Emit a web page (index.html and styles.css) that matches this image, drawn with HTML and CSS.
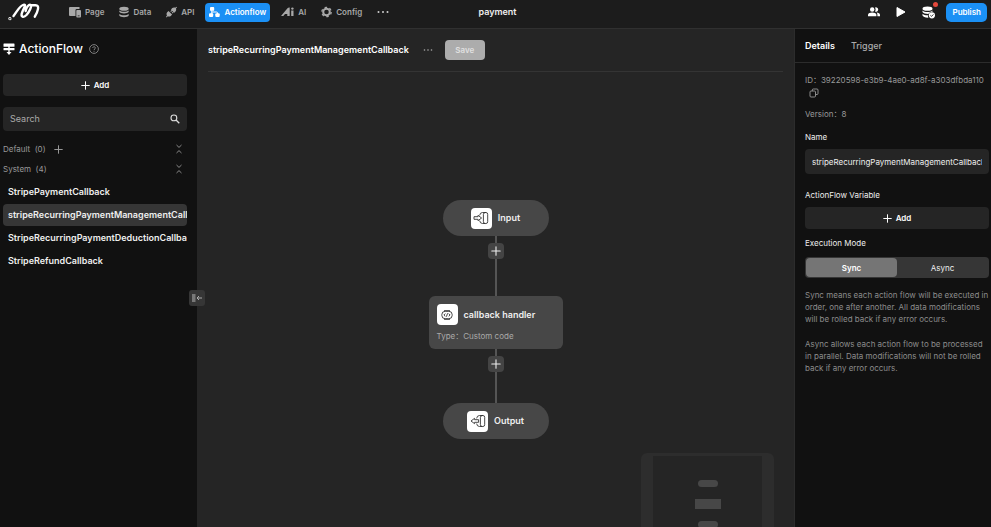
FILE: index.html
```html
<!DOCTYPE html>
<html lang="en">
<head>
<meta charset="utf-8">
<title>ActionFlow</title>
<link rel="stylesheet" href="styles.css">
</head>
<body>
<svg class="defs" aria-hidden="true">
  <symbol id="plus" viewBox="0 0 10 10"><path d="M5 .8v8.4M.8 5h8.4" fill="none" stroke="currentColor" stroke-width="1.1" stroke-linecap="round"/></symbol>
  <symbol id="fold" viewBox="0 0 8 10"><path d="M1.5 1 4 3.4 6.500 1M1.500 9 4 6.600 6.500 9" fill="none" stroke="currentColor" stroke-width=".9"/></symbol>
  <symbol id="door" viewBox="0 0 16 14"><g fill="none" stroke="#333" stroke-width=".9" stroke-linecap="round"><rect x="10.400" y="1.500" width="4.300" height="11" rx="1.800"/><path d="M12 1.500H9.500Q7 1.500 6.700 4M6.700 10q.3 2.500 2.800 2.500H12"/></g></symbol>
</svg>

<header class="topbar">
  <div class="left">
    <a class="logo" href="#" aria-label="Home"><svg width="34" height="20" viewBox="0 0 34 20" fill="none" stroke="#fff" stroke-width="2.400" stroke-linecap="round" stroke-linejoin="round"><path d="M5.500 14C9 9.500 12 3 16 2.600c3-.2-1.500 5.400-2.300 9.200-.7 3.400 2 4.200 5 1 2.800-3.200 5.400-8.800 4-9.800-1.700-1-4.700 2.600-5 6M22.700 3.200H27.500c4.500 0 2.500 6-.7 11.500"/><circle cx="1.900" cy="16.700" r=".4"/></svg></a>
    <nav class="nav">
      <a href="#"><svg width="12" height="12" viewBox="0 0 12 12" fill="currentColor"><path d="M1 1h9.500v2H7.800a1.300 1.300 0 0 0-1.300 1.300V10H1a1 1 0 0 1-1-1V2a1 1 0 0 1 1-1z"/><rect x="7.300" y="3.900" width="4.700" height="7.600" rx=".9"/><path d="M8.700 9.800h1.900" stroke="#1d1d1d" stroke-width=".8"/></svg>Page</a>
      <a href="#"><svg width="10" height="12" viewBox="0 0 10 12" fill="currentColor"><ellipse cx="5" cy="2.700" rx="4.700" ry="2"/><path d="M.3 4.400c1.700 1.900 7.700 1.900 9.400 0v1.400c-1 2.200-8.400 2.200-9.400 0zM.3 7.900c1.700 1.900 7.700 1.900 9.400 0v1.500c-1 2.300-8.400 2.300-9.400 0z"/></svg>Data</a>
      <a href="#"><svg width="11" height="12" viewBox="0 0 11 12" fill="currentColor"><path d="M1.200 6.300 2.500 5l3.600 3.600-1.300 1.300c-1 .9-2.200.8-3 .4L.6 11.400 0 10.700l1-1.200c-.6-1-.6-2.200.2-3.200zM5 3.400l1.300-1.300c1-.8 2.100-.8 3-.3l1-1.100.7.700-1.100 1.100c.5.900.4 2-.4 3L8.300 6.800zM4.300 5.200l1.300-1.100.7.700-1.200 1.200zM5.800 6.800 7 5.600l.7.700-1.300 1.200z"/></svg>API</a>
      <a href="#" class="active" aria-current="page"><svg width="11" height="12" viewBox="0 0 11 12" fill="currentColor"><rect x="1" y="1" width="4.200" height="3.800" rx=".9"/><rect x="0" y="7.300" width="4.200" height="3.800" rx="1"/><rect x="6.300" y="7.300" width="4.400" height="3.800" rx="1"/><path d="M2.800 4v4M2.800 6H7.500q1 0 1 1v1" fill="none" stroke="currentColor"/></svg>Actionflow</a>
      <a href="#" class="ai"><svg width="13" height="10" viewBox="0 0 13 10" fill="currentColor"><path d="M0 9 6.500 1.200Q7.400.4 8.700.6V9H6.300V7H4L2.300 9zM10.200 3.500h2.300V9h-2.300z"/><circle cx="11.400" cy="1.600" r="1.200"/></svg>AI</a>
      <a href="#"><svg width="11" height="12" viewBox="0 0 11 12" fill="none" stroke="currentColor"><circle cx="5.500" cy="6" r="3.300" stroke-width="2"/><circle cx="5.500" cy="6" r="4.700" stroke-width="1.300" stroke-dasharray="2.500 2.420"/></svg>Config</a>
      <button class="more" type="button" aria-label="More"><svg width="12" height="4" viewBox="0 0 12 4" fill="currentColor"><circle cx="1.500" cy="2" r="1"/><circle cx="6" cy="2" r="1"/><circle cx="10.500" cy="2" r="1"/></svg></button>
    </nav>
  </div>
  <strong class="project">payment</strong>
  <div class="actions">
    <button type="button" aria-label="Members"><svg width="12" height="10" viewBox="0 0 12 10" fill="currentColor"><circle cx="4.200" cy="2.500" r="2.200"/><path d="M0 9.300V7.800c0-3 8.400-3 8.400 0v1.500z"/><path d="M7 .6a2.200 2.200 0 1 1 0 3.900c.8-1.200.8-2.700 0-3.900zM8.600 5.500c1.700.1 3.400.9 3.400 2.300v1.500H9.400V7.800c0-.9-.3-1.600-.8-2.300z"/></svg></button>
    <button type="button" aria-label="Preview"><svg width="10" height="12" viewBox="0 0 10 12"><path d="M1 1.500 9 6l-8 4.500z" fill="currentColor" stroke="currentColor" stroke-linejoin="round"/></svg></button>
    <button type="button" class="sync" aria-label="Database status"><svg width="13" height="13" viewBox="0 0 13 13" fill="currentColor"><ellipse cx="5.500" cy="2.700" rx="5" ry="2.100"/><path d="M.5 4.600c2 2 8 2 10 0v1.200c-2 .1-3.400 1-4.100 2.200C3.800 8 1 7.300.5 6zM.5 7.800C1.700 9 4 9.400 5.900 9.300c0 .9.200 1.600.6 2.300C3.800 11.800.9 11 .5 9.600z"/><circle cx="9.900" cy="9.300" r="3.100"/><path d="m8.400 9.300 1.100 1.100 1.900-2" fill="none" stroke="#1d1d1d" stroke-width=".9"/></svg></button>
    <button type="button" class="publish">Publish</button>
  </div>
</header>

<div class="workspace">
  <aside class="sidebar">
    <h1><svg width="12" height="12" viewBox="0 0 12 12" fill="#fff"><rect x=".5" y=".5" width="11" height="3.200" rx=".5"/><rect x=".5" y="5" width="11" height="2.300" rx=".5"/><path d="M5.300 3h1.400v6h1.800L6 11.900 3.500 9h1.800z"/></svg>ActionFlow<svg width="10" height="10" viewBox="0 0 10 10" fill="none" stroke="#999" stroke-width=".8"><circle cx="5" cy="5" r="4.400"/><path d="M3.700 4c0-1.700 2.700-1.700 2.700-.1C6.400 5 5 4.900 5 6.100M5 6.900v.9"/></svg></h1>
    <button class="add" type="button"><svg width="9" height="9"><use href="#plus"/></svg>Add</button>
    <label class="search"><input type="search" placeholder="Search" aria-label="Search"><svg width="10" height="10" viewBox="0 0 10 10" fill="none" stroke="#ddd" stroke-width="1.100"><circle cx="3.900" cy="3.900" r="2.900"/><path d="m6 6 3.300 3.300" stroke-width="1.300"/></svg></label>
    <div class="group"><span>Default&nbsp; (0)</span><button type="button" aria-label="Add to Default"><svg width="9" height="9"><use href="#plus"/></svg></button><button class="fold" type="button" aria-label="Collapse Default"><svg width="8" height="10"><use href="#fold"/></svg></button></div>
    <div class="group"><span>System&nbsp; (4)</span><button class="fold" type="button" aria-label="Collapse System"><svg width="8" height="10"><use href="#fold"/></svg></button></div>
    <ul class="flows">
      <li><a href="#">StripePaymentCallback</a></li>
      <li><a href="#" class="selected">stripeRecurringPaymentManagementCallback</a></li>
      <li><a href="#">StripeRecurringPaymentDeductionCallback</a></li>
      <li><a href="#">StripeRefundCallback</a></li>
    </ul>
    <button class="handle" type="button" aria-label="Collapse sidebar"><svg width="12" height="10" viewBox="0 0 12 10"><rect x="1" y="1" width="3.500" height="8" fill="#777"/><path d="M11 5H6M8 3 6 5l2 2" fill="none" stroke="#aaa"/></svg></button>
  </aside>

  <main class="canvas">
    <div class="flow-head">
      <h2>stripeRecurringPaymentManagementCallback</h2>
      <button class="dots" type="button" aria-label="Flow options"><svg width="10" height="4" viewBox="0 0 10 4" fill="#aaa"><circle cx="1.500" cy="2" r=".8"/><circle cx="5" cy="2" r=".8"/><circle cx="8.500" cy="2" r=".8"/></svg></button>
      <button class="save" type="button">Save</button>
    </div>
    <div class="graph">
      <div class="terminal"><span class="tile"><svg width="16" height="14"><use href="#door"/><path d="M1 5.700h4V4.300L8.600 7 5 9.700V8.300H1z" fill="#fff" stroke="#333" stroke-width=".9" stroke-linejoin="round"/></svg></span>Input</div>
      <div class="link"><button type="button" aria-label="Insert step after Input"><svg width="10" height="10"><use href="#plus"/></svg></button></div>
      <section class="node">
        <h3><span class="tile"><svg width="12" height="12" viewBox="0 0 12 12" fill="none" stroke="#333" stroke-width=".9"><rect x=".8" y="2.300" width="10.400" height="7.400" rx="3.400"/><path d="M3 1.700h6M3 10.300h6M4.300 4.600 2.900 6l1.400 1.400M7.700 4.600 9.100 6 7.700 7.400M6.600 4.300 5.400 7.700"/></svg></span>callback handler</h3>
        <p>Type：Custom code</p>
      </section>
      <div class="link short"><button type="button" aria-label="Insert step after callback handler"><svg width="10" height="10"><use href="#plus"/></svg></button></div>
      <div class="terminal"><span class="tile"><svg width="16" height="14"><use href="#door"/><path d="M8.600 5.700h-4V4.300L1 7l3.600 2.700V8.300h4z" fill="#fff" stroke="#333" stroke-width=".9" stroke-linejoin="round"/></svg></span>Output</div>
    </div>
    <div class="minimap" aria-hidden="true"><div class="view"><i></i><i class="box"></i><i></i></div></div>
  </main>

  <aside class="details">
    <div class="tabs"><button class="current" type="button">Details</button><button type="button">Trigger</button></div>
    <div class="fields">
      <div class="ident">ID：39220598-e3b9-4ae0-ad8f-a303dfbda110</div>
      <button class="copy" type="button" aria-label="Copy ID"><svg width="10" height="10" viewBox="0 0 10 10" fill="none" stroke="#999" stroke-width=".9"><rect x="1" y="3" width="5.500" height="6" rx="1"/><path d="M3.300 3V2q0-1 1-1H8q1 0 1 1v3.500q0 1-1 1H6.500"/></svg></button>
      <div class="version">Version：8</div>
      <label for="name">Name</label>
      <input id="name" class="name" type="text" value="stripeRecurringPaymentManagementCallback">
      <h4>ActionFlow Variable</h4>
      <button class="add" type="button"><svg width="9" height="9"><use href="#plus"/></svg>Add</button>
      <h4 class="mode">Execution Mode</h4>
      <div class="segment"><button class="on" type="button">Sync</button><button type="button">Async</button></div>
      <p>Sync means each action flow will be executed in order, one after another. All data modifications will be rolled back if any error occurs.</p>
      <p>Async allows each action flow to be processed in parallel. Data modifications will not be rolled back if any error occurs.</p>
    </div>
  </aside>
</div>
</body>
</html>
```
FILE: styles.css
```css
* { box-sizing: border-box; }
body {
  margin: 0;
  min-height: 100vh;
  display: flex;
  flex-direction: column;
  background: #111;
  color: #eee;
  font: 8px/12px Inter, "Noto Sans CJK SC", sans-serif;
}
h1, h2, h3, h4, p, ul { margin: 0; padding: 0; }
ul { list-style: none; }
a { color: inherit; text-decoration: none; }
button { border: 0; padding: 0; background: none; color: inherit; font: inherit; }
svg { display: block; flex: none; }
.defs { position: absolute; width: 0; height: 0; }

.topbar {
  display: grid;
  grid-template-columns: 1fr auto 1fr;
  align-items: center;
  height: 29px;
  padding: 0 4px 4px 8px;
  background: #1c1c1c;
  border-bottom: 1px solid #303030;
}
.left, .nav, .nav a, .actions { display: flex; align-items: center; }
.left { gap: 23px; }
.nav { gap: 7px; color: #a8a8a8; font-size: 8px; font-weight: 600; }
.nav a { gap: 4px; height: 19px; padding: 0 4px; border-radius: 4px; }
.nav .active { background: #1b90f5; color: #fff; }
.more { padding: 4px; color: #ccc; }
.project { font-size: 9px; font-weight: 600; }
.actions { justify-content: flex-end; color: #fff; }
.actions button { margin-right: 16px; }
.actions .sync { position: relative; margin-right: 11px; }
.sync::after {
  content: "";
  position: absolute;
  top: -4px;
  right: -3px;
  width: 5px;
  height: 5px;
  border-radius: 50%;
  background: #e3483c;
}
.actions .publish { height: 19px; margin: 0; padding: 0 6px; border-radius: 5px; background: #1b90f5; font-weight: 600; }

.workspace { flex: 1; display: grid; grid-template-columns: 197px 1fr 197px; }

.sidebar { position: relative; padding: 12px 10px 0 3px; }
h1 { display: flex; align-items: center; gap: 4px; height: 16px; font-size: 12px; font-weight: 500; color: #fff; }
h1 svg:last-child { margin-left: 2px; }
.add {
  display: flex;
  align-items: center;
  justify-content: center;
  gap: 4px;
  width: 100%;
  height: 22px;
  border-radius: 4px;
  background: #252525;
  color: #fff;
  font-weight: 600;
}
.sidebar .add { margin-top: 17px; }
.search { display: flex; align-items: center; height: 24px; margin: 11px 0 8px; padding: 0 7px; border-radius: 4px; background: #252525; }
.search input { flex: 1; min-width: 0; padding: 0; border: 0; outline: 0; background: none; color: #eee; font: inherit; font-size: 9px; }
.search input::placeholder { color: #aaa; }
.group { display: flex; align-items: center; gap: 8px; height: 20px; padding-right: 4px; color: #999; }
.fold { margin-left: auto; }
.flows { padding-top: 2px; }
.flows li { padding-bottom: 1px; }
.flows a { display: block; height: 22px; padding-left: 5px; overflow: hidden; border-radius: 4px; font-size: 9px; font-weight: 600; line-height: 22px; white-space: nowrap; }
.flows .selected { background: #363636; }
.handle { position: absolute; top: 261px; right: -8px; z-index: 1; display: grid; place-items: center; width: 16px; height: 16px; border-radius: 3px; background: #363636; }

.canvas { position: relative; display: flex; flex-direction: column; padding: 0 11px; overflow: hidden; background: #252525; }
.flow-head { display: flex; align-items: center; height: 43px; border-bottom: 1px solid #343434; }
h2 { font-size: 9px; font-weight: 600; color: #fff; }
.dots { margin: 0 12px 0 14px; }
.save { width: 40px; height: 20px; border-radius: 4px; background: #acacac; color: #e0e0e0; font-weight: 600; }
.graph { display: flex; flex-direction: column; align-items: center; padding-top: 128px; }
.terminal { display: flex; align-items: center; justify-content: center; gap: 6px; width: 106px; height: 36px; border-radius: 18px; background: #474747; font-size: 9px; font-weight: 600; }
.tile { display: grid; place-items: center; width: 21px; height: 21px; border-radius: 4px; background: #fff; }
.link { display: flex; justify-content: center; width: 16px; height: 60px; padding-top: 7px; background: linear-gradient(#555, #555) center / 2px 100% no-repeat; }
.link.short { height: 54px; }
.link button { display: grid; place-items: center; width: 16px; height: 16px; border-radius: 4px; background: #444; }
.node { width: 134px; height: 53px; padding: 8px; border-radius: 6px; background: #474747; }
.node h3 { display: flex; align-items: center; gap: 6px; font-size: 9px; font-weight: 600; }
.node p { margin-top: 5px; color: #aaa; }
.minimap { position: absolute; right: 20px; bottom: 0; width: 133px; height: 74px; padding: 3px 12px 0; border-radius: 6px 6px 0 0; background: #2d2d2d; }
.view { display: flex; flex-direction: column; align-items: center; gap: 12px; height: 100%; padding-top: 24px; overflow: hidden; background: #252525; }
.view i { flex: none; width: 20px; height: 7px; border-radius: 4px; background: #474747; }
.view .box { width: 26px; height: 10px; border-radius: 0; }

.details { min-width: 0; border-left: 1px solid #2c2c2c; }
.tabs { display: flex; gap: 16px; height: 34px; padding: 0 10px; border-bottom: 1px solid #2c2c2c; color: #aaa; font-size: 9px; font-weight: 500; }
.tabs .current { color: #fff; font-weight: 600; }
.fields { padding: 11px 2px 0 10px; }
.ident { color: #999; white-space: nowrap; }
.copy { display: block; margin: 2px 4px 10px; }
.version { margin-bottom: 11px; color: #999; }
.fields label { display: block; }
.name { display: block; width: 100%; height: 25px; margin: 6px 0 15px; padding: 0 7px; border: 0; border-radius: 4px; background: #252525; color: #eee; font: inherit; }
h4 { margin-bottom: 6px; font-size: 8px; font-weight: 400; }
.fields .mode { margin-top: 8px; margin-bottom: 8px; }
.segment { display: grid; grid-template-columns: 1fr 1fr; height: 21px; margin-bottom: 11px; padding: 1px; border-radius: 4px; background: #363636; }
.segment .on { border-radius: 4px; background: #757575; color: #fff; font-weight: 600; }
.fields p { margin-bottom: 13px; color: #8c8c8c; }
```
